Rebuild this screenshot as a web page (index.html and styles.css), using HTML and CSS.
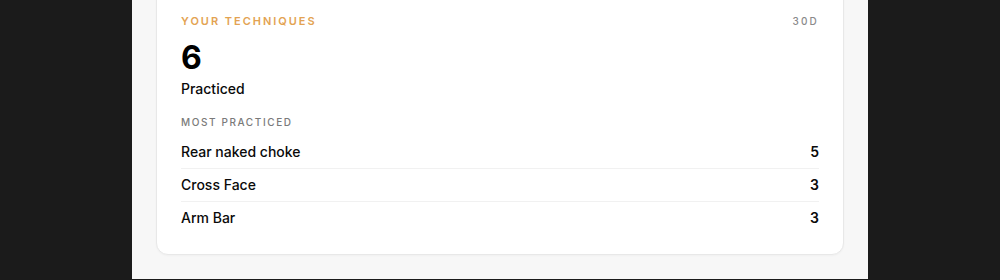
FILE: index.html
```html
<!DOCTYPE html>
<html lang="en">
<head>
    <meta charset="UTF-8">
    <meta name="viewport" content="width=device-width, initial-scale=1.0">
    <title>Your techniques</title>
    <link rel="stylesheet" href="styles.css">
</head>
<body>
    <div class="page">
        <div class="card">
            <div class="card-head">
                <span class="card-label">Your techniques</span>
                <span class="card-range">30D</span>
            </div>
            <div class="big-number">6</div>
            <div class="big-caption">Practiced</div>
            <div class="sub-label">Most practiced</div>
            <div class="tech-list">
                <div class="tech-row">
                    <span class="tech-name">Rear naked choke</span>
                    <span class="tech-count">5</span>
                </div>
                <div class="tech-row">
                    <span class="tech-name">Cross Face</span>
                    <span class="tech-count">3</span>
                </div>
                <div class="tech-row">
                    <span class="tech-name">Arm Bar</span>
                    <span class="tech-count">3</span>
                </div>
            </div>
        </div>
    </div>
</body>
</html>
```

FILE: styles.css
```css
html, body {
    margin: 0;
    padding: 0;
    background-color: #1b1b1b;
    font-family: Inter, "Noto Sans", sans-serif;
    color: #0a0a0a;
}
.page {
    display: flex;
    flex-direction: column;
    width: 736px;
    margin: 0 auto;
    padding: 0 24px 24px;
    box-sizing: border-box;
    background-color: #f7f7f7;
}
.card {
    margin-top: -12px;
    background-color: #fff;
    border: 1px solid #e8e8e8;
    border-radius: 12px;
    box-shadow: 0 1px 2px rgba(0,0,0,0.03);
    padding: 24px 24px 20px;
}
.card-head {
    display: flex;
    justify-content: space-between;
    align-items: center;
    height: 16px;
}
.card-label {
    font-size: 11px;
    font-weight: 600;
    letter-spacing: 0.18em;
    text-transform: uppercase;
    color: #e3a352;
}
.card-range {
    font-size: 10px;
    font-weight: 500;
    letter-spacing: 0.22em;
    color: #8a8a8a;
    margin-right: 0;
}
.big-number {
    margin-top: 11px;
    font-size: 32px;
    line-height: 36px;
    font-weight: 700;
    color: #000;
}
.big-caption {
    margin-top: 3px;
    font-size: 14px;
    line-height: 20px;
    font-weight: 500;
}
.sub-label {
    margin-top: 16px;
    font-size: 10px;
    line-height: 14px;
    font-weight: 500;
    letter-spacing: 0.16em;
    text-transform: uppercase;
    color: #7a7a7a;
}
.tech-list {
    margin-top: 7px;
}
.tech-row {
    display: flex;
    justify-content: space-between;
    padding: 8px 0;
    font-size: 14px;
    line-height: 16px;
    font-weight: 500;
    border-bottom: 1px solid #f1f1f1;
}
.tech-row:last-child {
    border-bottom: none;
}
.tech-count {
    font-weight: 600;
}
```
